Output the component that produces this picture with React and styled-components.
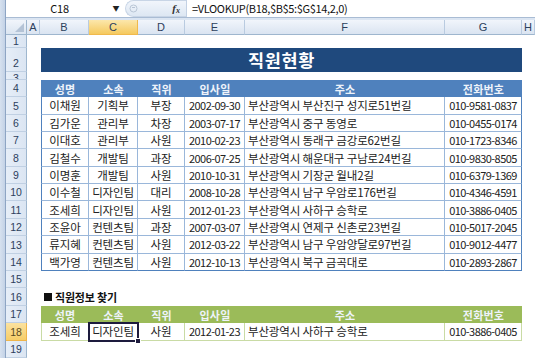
import React from 'react';
import styled, { createGlobalStyle, css } from 'styled-components';

const GlobalStyle = createGlobalStyle`
  html, body {
    margin: 0;
    padding: 0;
    background: #fff;
    overflow: hidden;
  }
  body {
    font-family: "Noto Sans CJK KR", "Noto Sans", sans-serif;
  }
`;

const COLS = ['A', 'B', 'C', 'D', 'E', 'F', 'G', 'H'];
const SELECTED_COL = 'C';
const SELECTED_ROW = 18;
const TIGHT_ROW = 1;
const SHORT_ROW = 3;

const HEADERS = ['성명', '소속', '직위', '입사일', '주소', '전화번호'];
// columns holding dates / phone numbers get their own sizing
const NUMERIC = [false, false, false, true, false, true];

const EMPLOYEES = [
  ['이채원', '기획부', '부장', '2002-09-30', '부산광역시 부산진구 성지로51번길', '010-9581-0837'],
  ['김가운', '관리부', '차장', '2003-07-17', '부산광역시 중구 동영로', '010-0455-0174'],
  ['이대호', '관리부', '사원', '2010-02-23', '부산광역시 동래구 금강로62번길', '010-1723-8346'],
  ['김철수', '개발팀', '과장', '2006-07-25', '부산광역시 해운대구 구남로24번길', '010-9830-8505'],
  ['이명훈', '개발팀', '사원', '2010-10-31', '부산광역시 기장군 월내2길', '010-6379-1369'],
  ['이수철', '디자인팀', '대리', '2008-10-28', '부산광역시 남구 우암로176번길', '010-4346-4591'],
  ['조세희', '디자인팀', '사원', '2012-01-23', '부산광역시 사하구 승학로', '010-3886-0405'],
  ['조윤아', '컨텐츠팀', '과장', '2007-03-07', '부산광역시 연제구 신촌로23번길', '010-5017-2045'],
  ['류지혜', '컨텐츠팀', '사원', '2012-03-22', '부산광역시 남구 우암양달로97번길', '010-9012-4477'],
  ['백가영', '컨텐츠팀', '사원', '2012-10-13', '부산광역시 북구 금곡대로', '010-2893-2867'],
];

const LOOKUP = ['조세희', '디자인팀', '사원', '2012-01-23', '부산광역시 사하구 승학로', '010-3886-0405'];

const Window = styled.div`
  display: flex;
  width: 535px;
  height: 358px;
  overflow: hidden;
`;

const FrameEdge = styled.div`
  width: 5px;
  flex: none;
  background: linear-gradient(90deg, #d6e1ef, #c3d2e6);
  border-right: 1px solid #8ea5c4;
`;

const Main = styled.div`
  flex: 1;
  display: flex;
  flex-direction: column;
  min-width: 0;
`;

const FormulaBar = styled.div`
  display: flex;
  height: 17px;
  background: #fff;
  border-bottom: 1px solid #a9bcd4;
  font-family: "Noto Sans CJK KR", sans-serif;
  font-size: 11px;
  color: #111;
`;

const BarGap = styled.div`
  height: 2px;
  background: #dbe5f2;
`;

const NameBox = styled.div`
  width: 113px;
  display: flex;
  align-items: center;
  padding-left: 2px;
`;

const NameText = styled.span`
  flex: 1;
  text-align: center;
  letter-spacing: -0.2px;
`;

const Caret = styled.span`
  width: 10px;
  font-size: 7px;
  color: #222;
  text-align: center;
`;

const FxZone = styled.div`
  width: 61px;
  margin-left: 4px;
  display: flex;
  align-items: center;
  justify-content: space-between;
  padding: 0 6px 0 3px;
  box-sizing: border-box;
  border-radius: 9px 0 0 9px;
  background: linear-gradient(180deg, #f1f5fb, #dde7f3);
  border: 1px solid #c8d5e6;
  border-right: none;
`;

const Fx = styled.span`
  font-family: "Liberation Serif", serif;
  font-style: italic;
  font-weight: bold;
  font-size: 11px;
  color: #333;
  sub {
    font-size: 8px;
    vertical-align: -1px;
  }
`;

const FormulaText = styled.div`
  flex: 1;
  display: flex;
  align-items: center;
  padding-left: 5px;
  border-left: 1px solid #c3d1e4;
  letter-spacing: -0.35px;
  white-space: nowrap;
`;

const Sheet = styled.div`
  flex: 1;
  display: grid;
  grid-template-columns: 21px 13px 49px 49px 47px 60px 200px 77px 1fr;
  grid-template-rows: 15px 13px 24px 8.5px 17px repeat(15, 17.4px);
  font-family: "Noto Sans CJK KR", sans-serif;
`;

const headCss = css`
  display: flex;
  justify-content: center;
  font-family: "Liberation Sans", Arial, sans-serif;
  font-size: 11px;
  color: #2c405c;
  box-sizing: border-box;
  overflow: hidden;
`;

const Corner = styled.div`
  ${headCss};
  grid-column: 1;
  grid-row: 1;
  background: linear-gradient(180deg, #f1f5fb, #dbe5f1);
  border-right: 1px solid #9eb6ce;
  border-bottom: 1px solid #9eb6ce;
  align-items: flex-end;
  justify-content: flex-end;
  padding: 0 2px 2px 0;
`;

const ColHead = styled.div`
  ${headCss};
  grid-row: 1;
  align-items: center;
  background: ${p => (p.$active
    ? 'linear-gradient(180deg, #fce7ab, #f5c95e)'
    : 'linear-gradient(180deg, #f1f5fb, #dae4f1)')};
  border-right: 1px solid ${p => (p.$active ? '#f0b94c' : '#b9cbe0')};
  border-bottom: 1px solid ${p => (p.$active ? '#f0b94c' : '#9eb6ce')};
`;

const RowHead = styled.div`
  ${headCss};
  grid-column: 1;
  font-size: 10.5px;
  align-items: ${p => (p.$short ? 'flex-start' : 'flex-end')};
  padding-bottom: ${p => (p.$short || p.$tight ? '0' : '2px')};
  line-height: 12px;
  background: ${p => (p.$active
    ? 'linear-gradient(180deg, #fbe2a0, #f6cd68)'
    : 'linear-gradient(90deg, #e6eef8, #dbe5f2)')};
  border-right: 1px solid ${p => (p.$active ? '#efb54a' : '#9eb6ce')};
  border-bottom: 1px solid ${p => (p.$active ? '#efb54a' : '#c0d0e3')};
  color: ${p => (p.$active ? '#5a4b22' : '#2c405c')};
`;

const TitleBand = styled.div`
  grid-column: 3 / 9;
  grid-row: 3;
  margin-left: 1px;
  display: flex;
  align-items: center;
  justify-content: center;
  background: #1f497d;
  color: #fff;
  font-size: 17.5px;
  font-weight: bold;
  letter-spacing: 0.6px;
`;

const Table = styled.div`
  grid-column: 3 / 9;
  grid-row: ${p => p.$rows};
  margin-left: 1px;
  display: grid;
  grid-template-columns: 48px 49px 47px 60px 200px 77px;
  grid-auto-rows: 1fr;
  grid-template-rows: ${p => p.$template};
`;

const Cell = styled.div`
  position: relative;
  display: flex;
  align-items: center;
  justify-content: ${p => (p.$left ? 'flex-start' : 'center')};
  padding-left: ${p => (p.$left ? '3px' : '0')};
  box-sizing: border-box;
  font-size: ${p => (p.$numeric ? '11px' : '11.5px')};
  letter-spacing: ${p => (p.$numeric ? '-0.55px' : '-0.15px')};
  white-space: nowrap;
  color: #222;
  background: #fff;
  border-right: 1px solid ${p => p.$line};
  border-bottom: 1px solid ${p => (p.$lastRow ? p.$edge : p.$line)};
  ${p => p.$first && css`border-left: 1px solid ${p.$edge};`}
  ${p => p.$last && css`border-right-color: ${p.$edge};`}
  ${p => p.$selected && css`
    outline: 2px solid #1d1b3d;
    outline-offset: -1px;
    z-index: 1;
    &::after {
      content: '';
      position: absolute;
      right: -4px;
      bottom: -4px;
      width: 4px;
      height: 4px;
      background: #1d1b3d;
      border: 1px solid #fff;
    }
  `}
`;

const HeadCell = styled.div`
  display: flex;
  align-items: center;
  justify-content: center;
  font-size: 11px;
  font-weight: bold;
  letter-spacing: 0.2px;
  color: #eef3fa;
  background: ${p => p.$bg};
`;

const SectionLabel = styled.div`
  grid-column: 3 / 9;
  grid-row: 17;
  display: flex;
  align-items: center;
  gap: 3px;
  padding-left: 4px;
  font-size: 11px;
  font-weight: bold;
  color: #111;
  letter-spacing: -0.2px;
`;

const Bullet = styled.span`
  width: 8px;
  height: 8px;
  background: #111;
`;

const CornerMark = () => (
  <svg width="9" height="9" viewBox="0 0 9 9">
    <polygon points="9,0 9,9 0,9" fill="#b4c3d6" />
  </svg>
);

const Grip = () => (
  <svg width="9" height="9" viewBox="0 0 9 9">
    <circle cx="4.5" cy="4.5" r="3.5" fill="none" stroke="#b9c6d6" strokeWidth="1" />
    <line x1="3" y1="3.5" x2="6" y2="3.5" stroke="#aab8ca" strokeWidth="0.8" />
  </svg>
);

const DataRow = ({ values, lastRow, selectedIndex, line, edge }) => (
  <>
    {values.map((v, i) => (
      <Cell
        key={i}
        $left={i === 4}
        $numeric={NUMERIC[i]}
        $first={i === 0}
        $last={i === values.length - 1}
        $lastRow={lastRow}
        $line={line}
        $edge={edge}
        $selected={i === selectedIndex}
      >
        {v}
      </Cell>
    ))}
  </>
);

const App = () => {
  const rowNums = Array.from({ length: 19 }, (_, i) => i + 1);

  return (
    <Window>
      <GlobalStyle />
      <FrameEdge />
      <Main>
        <FormulaBar>
          <NameBox>
            <NameText>C18</NameText>
            <Caret>▼</Caret>
          </NameBox>
          <FxZone>
            <Grip />
            <Fx>f<sub>x</sub></Fx>
          </FxZone>
          <FormulaText>=VLOOKUP(B18,$B$5:$G$14,2,0)</FormulaText>
        </FormulaBar>
        <BarGap />
        <Sheet>
          <Corner><CornerMark /></Corner>
          {COLS.map((c, i) => (
            <ColHead key={c} $active={c === SELECTED_COL} style={{ gridColumn: i + 2 }}>
              {c}
            </ColHead>
          ))}
          {rowNums.map(n => (
            <RowHead
              key={n}
              $active={n === SELECTED_ROW}
              $tight={n === TIGHT_ROW}
              $short={n === SHORT_ROW}
              style={{ gridRow: n + 1 }}
            >
              {n}
            </RowHead>
          ))}

          <TitleBand>직원현황</TitleBand>

          <Table $rows="5 / 16" $template="17px repeat(10, 1fr)">
            {HEADERS.map(h => (
              <HeadCell key={h} $bg="#4f81bd">{h}</HeadCell>
            ))}
            {EMPLOYEES.map((r, i) => (
              <DataRow
                key={r[0]}
                values={r}
                lastRow={i === EMPLOYEES.length - 1}
                line="#9ab7da"
                edge="#4f81bd"
              />
            ))}
          </Table>

          <SectionLabel>
            <Bullet />
            직원정보 찾기
          </SectionLabel>

          <Table $rows="18 / 20" $template="1fr 1fr">
            {HEADERS.map(h => (
              <HeadCell key={h} $bg="#9bbb59">{h}</HeadCell>
            ))}
            <DataRow values={LOOKUP} lastRow selectedIndex={1} line="#c9dba5" edge="#c9dba5" />
          </Table>
        </Sheet>
      </Main>
    </Window>
  );
};

export default App;
